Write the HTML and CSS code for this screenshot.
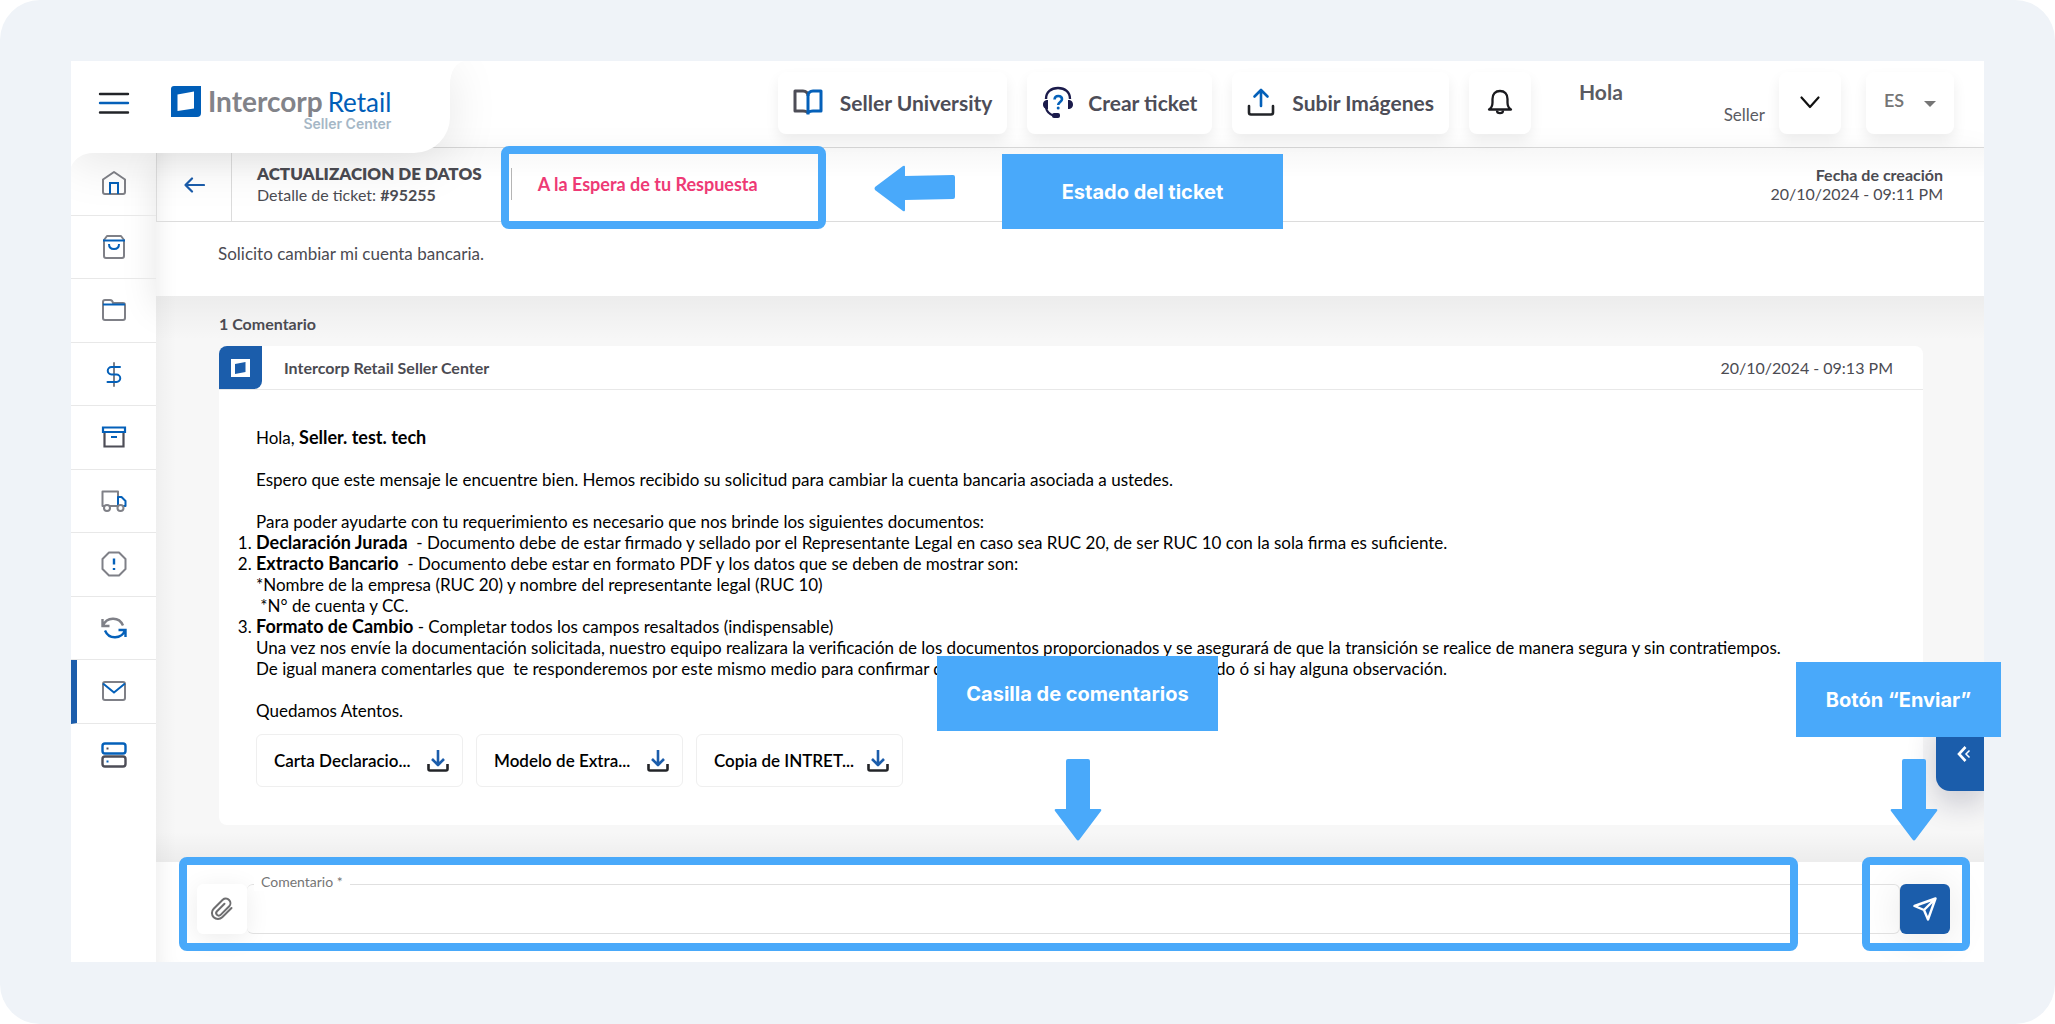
FILE: index.html
```html
<!DOCTYPE html>
<html lang="es">
<head>
    <meta charset="UTF-8">
    <meta name="viewport" content="width=device-width, initial-scale=1.0">
    <title>Detalle de ticket</title>
    <link rel="stylesheet" href="styles.css">
</head>
<body>
    <div class="board">
        <div class="app">
            <header class="topbar">
                <div class="brand">
                    <button class="menu-btn" aria-label="Menú">
                        <svg width="32" height="22" viewBox="0 0 32 22" fill="none" stroke-width="2.4" stroke-linecap="round">
                            <path d="M2 2h28M2 20.500h28" stroke="#222428"/>
                            <path d="M2 11h28" stroke="#0460b9"/>
                        </svg>
                    </button>
                    <a class="logo" href="#">
                        <svg width="30" height="31" viewBox="0 0 30 31">
                            <path d="M3 0h27v27a4 4 0 0 1-4 4H0V3a3 3 0 0 1 3-3z" fill="#005eb8"/>
                            <path d="M6.500 8.500L23 5.500v17L6.500 25z" fill="#fff"/>
                        </svg>
                        <span class="logo-text">
                            <span class="logo-name"><b>Intercorp</b><span>Retail</span></span>
                            <span class="logo-sub">Seller Center</span>
                        </span>
                    </a>
                    <svg class="brand-flare" width="14" height="24" viewBox="0 0 14 24"><path d="M0 0h14C6 2 0 10 0 24z" fill="#fff"/></svg>
                    <svg class="brand-corner" width="22" height="14" viewBox="0 0 22 14"><path d="M0 0h22C12 0 4 5 0 14z" fill="#fff"/></svg>
                </div>

                <nav class="actions">
                    <a class="action" href="#">
                        <svg width="30" height="27" viewBox="0 0 30 27" fill="none" stroke-width="3" stroke-linejoin="round">
                            <path d="M15 24C14 22.500 12 22 10 22H2V2h8c3 0 5 2 5 5" stroke="#4d4d57"/>
                            <path d="M15 25.500V7c0-3 2-5 5-5h8v20h-8c-2 0-4 .5-5 2" stroke="#0460b9"/>
                        </svg>
                        Seller University
                    </a>
                    <a class="action action-ticket" href="#">
                        <svg width="32" height="32" viewBox="0 0 32 32" fill="none">
                            <path d="M4 13C4 6 9 2 16 2s12 4 12 11" stroke="#1b1b4b" stroke-width="2.400"/>
                            <path d="M4 22c1 4 3 6 7 7.500" stroke="#1b1b4b" stroke-width="2.200"/>
                            <path d="M6 14v9C2.500 23 1 21 1 18.500S2.500 14 6 14zM26 14v9c3.500 0 5-2 5-4.500S29.500 14 26 14z" fill="#1b1b4b"/>
                            <rect x="10" y="27" width="8" height="5" rx="2" fill="#1b1b4b"/>
                            <path d="M12.500 13.500c.2-2.300 1.700-3.500 3.700-3.500 2.200 0 3.800 1.300 3.800 3.300 0 2.500-3.800 3-3.800 5.700" stroke="#0460b9" stroke-width="2.600"/>
                            <circle cx="16.200" cy="22" r="1.500" fill="#0460b9"/>
                        </svg>
                        Crear ticket
                    </a>
                    <a class="action" href="#">
                        <svg width="28" height="28" viewBox="0 0 28 28" fill="none" stroke-width="2.600" stroke-linecap="round" stroke-linejoin="round">
                            <path d="M14 18V2M7.500 8.500L14 2l6.500 6.500" stroke="#0460b9"/>
                            <path d="M2 18v6.500a2 2 0 0 0 2 2h20a2 2 0 0 0 2-2V18" stroke="#222428"/>
                        </svg>
                        Subir Imágenes
                    </a>
                    <button class="action action-icon" aria-label="Notificaciones">
                        <svg width="26" height="26" viewBox="0 0 26 26" fill="none" stroke="#1b1b1f" stroke-width="2.300" stroke-linejoin="round">
                            <path d="M2 20.500c2.500-1.500 3.500-3.500 3.500-7V10c0-5 3-8 7.500-8s7.500 3 7.500 8v3.500c0 3.500 1 5.500 3.500 7z"/>
                            <path d="M10 21.500c0 1.700 1.200 2.700 3 2.700s3-1 3-2.700"/>
                        </svg>
                    </button>
                    <div class="user">
                        <span class="user-hello">Hola</span>
                        <span class="user-role">Seller</span>
                    </div>
                    <button class="action action-icon" aria-label="Cuenta">
                        <svg width="20" height="13" viewBox="0 0 20 13" fill="none" stroke="#111" stroke-width="2.200" stroke-linecap="round" stroke-linejoin="round"><path d="M1.500 1.500L10 11l8.500-9.500"/></svg>
                    </button>
                    <div class="language">
                        <select aria-label="Idioma">
                            <option>ES</option>
                            <option>EN</option>
                        </select>
                        <svg width="12" height="6" viewBox="0 0 12 6"><path d="M0 0h12L6 6z" fill="#757575"/></svg>
                    </div>
                </nav>
            </header>

            <div class="layout">
                <nav class="sidebar">
                    <a href="#" aria-label="Inicio">
                        <svg width="26" height="26" viewBox="0 0 26 26" fill="none" stroke-width="2">
                            <path d="M2 9.500L13 2l11 7.500V22a2 2 0 0 1-2 2H4a2 2 0 0 1-2-2z" stroke="#7f8087" stroke-linejoin="round"/>
                            <path d="M9 24V13h8v11" stroke="#0460b9"/>
                        </svg>
                    </a>
                    <a href="#" aria-label="Órdenes">
                        <svg width="26" height="26" viewBox="0 0 26 26" fill="none" stroke-width="2">
                            <path d="M3 6l3-4h14l3 4v16a2 2 0 0 1-2 2H5a2 2 0 0 1-2-2z" stroke="#7f8087" stroke-linejoin="round"/>
                            <path d="M2 6.500h22M8 10c0 3 2 5 5 5s5-2 5-5" stroke="#0460b9"/>
                        </svg>
                    </a>
                    <a href="#" aria-label="Catálogo">
                        <svg width="26" height="26" viewBox="0 0 26 26" fill="none" stroke-width="2">
                            <path d="M2 7V5a2 2 0 0 1 2-2h5q2.500 0 3 3h10a2 2 0 0 1 2 2v13a2 2 0 0 1-2 2H4a2 2 0 0 1-2-2z" stroke="#7f8087" stroke-linejoin="round"/>
                            <path d="M2 7.500h22" stroke="#0460b9"/>
                        </svg>
                    </a>
                    <a href="#" aria-label="Finanzas">
                        <svg width="26" height="26" viewBox="0 0 26 26" fill="none" stroke-width="2" stroke-linecap="round">
                            <path d="M13 2v23" stroke="#7f8087"/>
                            <path d="M19 6h-8.500a3.500 3.500 0 0 0 0 7.500h5a3.500 3.500 0 0 1 0 7.500H6.500" stroke="#0460b9"/>
                        </svg>
                    </a>
                    <a href="#" aria-label="Inventario">
                        <svg width="26" height="26" viewBox="0 0 26 26" fill="none" stroke-width="2.200">
                            <path d="M3.500 8v14.500h19V8" stroke="#4d4d57"/>
                            <path d="M2 3.500h22V8H2zM10 13h6" stroke="#0460b9"/>
                        </svg>
                    </a>
                    <a href="#" aria-label="Envíos">
                        <svg width="26" height="26" viewBox="0 0 26 26" fill="none" stroke-width="2">
                            <path d="M3 18H1.500V3.500H17V18H9" stroke="#7f8087" stroke-linejoin="round"/>
                            <path d="M17 18V9h3.500l4 4v5H22" stroke="#0460b9" stroke-linejoin="round"/>
                            <circle cx="6" cy="20" r="3" stroke="#7f8087" fill="#fff"/>
                            <circle cx="19.500" cy="20" r="3" stroke="#7f8087" fill="#fff"/>
                        </svg>
                    </a>
                    <a href="#" aria-label="Alertas">
                        <svg width="26" height="26" viewBox="0 0 26 26" fill="none" stroke-width="2">
                            <path d="M8 1.500h10L24.500 8v10L18 24.500H8L1.500 18V8z" stroke="#7f8087" stroke-linejoin="round"/>
                            <path d="M13 7.500v6M13 17v2" stroke="#0460b9" stroke-width="2.400"/>
                        </svg>
                    </a>
                    <a href="#" aria-label="Devoluciones">
                        <svg width="26" height="26" viewBox="0 0 26 26" fill="none" stroke-width="2.400">
                            <path d="M1.500 4v7h7M2 10.500C5.500 2 18 1 22 10.500" stroke="#7f8087"/>
                            <path d="M24.500 22v-7h-7M24 15.500C20.500 24 8 25 4 15.500" stroke="#0460b9"/>
                        </svg>
                    </a>
                    <a class="active" href="#" aria-label="Tickets">
                        <svg width="26" height="26" viewBox="0 0 26 26" fill="none" stroke-width="2">
                            <rect x="2" y="4" width="22" height="18" rx="2" stroke="#7f8087"/>
                            <path d="M2 5.500l11 9 11-9" stroke="#0460b9"/>
                        </svg>
                    </a>
                    <a href="#" aria-label="Servicios">
                        <svg width="26" height="26" viewBox="0 0 26 26" fill="none" stroke-width="2.400">
                            <rect x="1.500" y="1.500" width="23" height="10" rx="2.500" stroke="#0460b9"/>
                            <rect x="1.500" y="14.500" width="23" height="10" rx="2.500" stroke="#4d4d57"/>
                            <path d="M5.500 6.500h2" stroke="#4d4d57" stroke-width="2"/>
                            <path d="M5.500 19.500h2" stroke="#0460b9" stroke-width="2"/>
                        </svg>
                    </a>
                </nav>

                <main class="main">
                    <section class="ticket">
                        <div class="ticket-head">
                            <a class="back" href="#" aria-label="Volver">
                                <svg width="21" height="16" viewBox="0 0 21 16" fill="none" stroke="#1b5dab" stroke-width="2.200" stroke-linecap="round" stroke-linejoin="round"><path d="M20 8H1.500M8 1.500L1.500 8 8 14.500"/></svg>
                            </a>
                            <div class="ticket-title">
                                <h1>ACTUALIZACION DE DATOS</h1>
                                <p>Detalle de ticket: <b>#95255</b></p>
                            </div>
                            <div class="ticket-status">A la Espera de tu Respuesta</div>
                            <div class="ticket-date">
                                <b>Fecha de creación</b>
                                <span>20/10/2024 - 09:11 PM</span>
                            </div>
                        </div>
                        <p class="ticket-summary">Solicito cambiar mi cuenta bancaria.</p>
                    </section>

                    <section class="comments">
                        <h2>1 Comentario</h2>
                        <article class="comment">
                            <header class="comment-head">
                                <span class="avatar">
                                    <svg width="19" height="18" viewBox="0 0 19 18"><path fill-rule="evenodd" d="M0 0h19v18H0zM4 5v10l10.500-2V3z" fill="#fff"/></svg>
                                </span>
                                <b>Intercorp Retail Seller Center</b>
                                <time>20/10/2024 - 09:13 PM</time>
                            </header>
                            <div class="comment-body">
                                <p>Hola, <b>Seller. test. tech</b></p>
                                <p>Espero que este mensaje le encuentre bien. Hemos recibido su solicitud para cambiar la cuenta bancaria asociada a ustedes.</p>
                                <div>Para poder ayudarte con tu requerimiento es necesario que nos brinde los siguientes documentos:</div>
                                <ol>
                                    <li><b>Declaración Jurada</b>&nbsp; - Documento debe de estar firmado y sellado por el Representante Legal en caso sea RUC 20, de ser RUC 10 con la sola firma es suficiente.</li>
                                    <li><b>Extracto Bancario</b>&nbsp; - Documento debe estar en formato PDF y los datos que se deben de mostrar son:<br>
                                        *Nombre de la empresa (RUC 20) y nombre del representante legal (RUC 10)<br>
                                        &nbsp;*N° de cuenta y CC.</li>
                                    <li><b>Formato de Cambio</b> - Completar todos los campos resaltados (indispensable)<br>
                                        Una vez nos envíe la documentación solicitada, nuestro equipo realizara la verificación de los documentos proporcionados y se asegurará de que la transición se realice de manera segura y sin contratiempos.<br>
                                        De igual manera comentarles que&nbsp; te responderemos por este mismo medio para confirmar que el cambio de cuenta ya fue realizado ó si hay alguna observación.</li>
                                </ol>
                                <p>Quedamos Atentos.</p>
                            </div>
                            <div class="files">
                                <a class="file" href="#">Carta Declaracio...
                                    <svg width="22" height="22" viewBox="0 0 22 22" fill="none" stroke-width="2.600" stroke-linejoin="round"><path d="M11 0v14M5 9l6 6 6-6" stroke="#1b5dab"/><path d="M1.500 14v5a1.500 1.500 0 0 0 1.500 1.500h16a1.500 1.500 0 0 0 1.500-1.500v-5" stroke="#222428"/></svg>
                                </a>
                                <a class="file" href="#">Modelo de Extra...
                                    <svg width="22" height="22" viewBox="0 0 22 22" fill="none" stroke-width="2.600" stroke-linejoin="round"><path d="M11 0v14M5 9l6 6 6-6" stroke="#1b5dab"/><path d="M1.500 14v5a1.500 1.500 0 0 0 1.500 1.500h16a1.500 1.500 0 0 0 1.500-1.500v-5" stroke="#222428"/></svg>
                                </a>
                                <a class="file" href="#">Copia de INTRET...
                                    <svg width="22" height="22" viewBox="0 0 22 22" fill="none" stroke-width="2.600" stroke-linejoin="round"><path d="M11 0v14M5 9l6 6 6-6" stroke="#1b5dab"/><path d="M1.500 14v5a1.500 1.500 0 0 0 1.500 1.500h16a1.500 1.500 0 0 0 1.500-1.500v-5" stroke="#222428"/></svg>
                                </a>
                            </div>
                        </article>
                        <button class="side-tab" aria-label="Abrir panel">
                            <svg width="14" height="16" viewBox="0 0 14 16" fill="none" stroke="#fff"><path d="M8.500 1L2 8l6.500 7" stroke-width="2.600"/><path d="M12.500 4.500L9 8l3.500 3.500" stroke-width="1.500"/></svg>
                        </button>
                    </section>

                    <form class="reply">
                        <button class="attach" type="button" aria-label="Adjuntar archivo">
                            <svg width="24" height="24" viewBox="0 0 24 24" fill="none" stroke="#6e6e70" stroke-width="2" stroke-linecap="round"><path d="M21.500 11l-9.300 9.300a6 6 0 0 1-8.500-8.500l9-9a4.600 4.600 0 0 1 6.500 6.500l-8.600 8.600a2.500 2.500 0 0 1-3.600-3.600l7.500-7.500"/></svg>
                        </button>
                        <div class="reply-field">
                            <label for="comentario">Comentario *</label>
                            <input id="comentario" type="text" required>
                        </div>
                        <button class="send" type="submit" aria-label="Enviar">
                            <svg width="24" height="24" viewBox="0 0 24 24" fill="none" stroke="#fff" stroke-width="2.400" stroke-linejoin="round"><path d="M22.500 1.500L1.500 9l9.500 4 4 9.500zM22.500 1.500L11 13"/></svg>
                        </button>
                    </form>
                </main>
            </div>
        </div>

        <!-- Guide marks drawn over the app -->
        <div class="mark mark-status"></div>
        <div class="mark mark-reply"></div>
        <div class="mark mark-send"></div>
        <svg class="arrow arrow-status" width="82" height="48" viewBox="0 0 82 48"><path d="M1 22L29 1q2-1 2 1v9l48-1q2 0 2 2v20q0 2-2 2l-48 1v10q0 2-2 1L1 25q-1-1.500 0-3z"/></svg>
        <svg class="arrow arrow-reply" width="48" height="82" viewBox="0 0 48 82"><path d="M14 0h20q2 0 2 2v48h10q2 0 1 2L25.500 80.500q-1.500 2-3 0L1 52q-1-2 1-2h10V2q0-2 2-2z"/></svg>
        <svg class="arrow arrow-send" width="48" height="82" viewBox="0 0 48 82"><path d="M14 0h20q2 0 2 2v48h10q2 0 1 2L25.500 80.500q-1.500 2-3 0L1 52q-1-2 1-2h10V2q0-2 2-2z"/></svg>
        <div class="tag tag-status">Estado del ticket</div>
        <div class="tag tag-reply">Casilla de comentarios</div>
        <div class="tag tag-send">Botón “Enviar”</div>
    </div>
</body>
</html>
```
FILE: styles.css
```css
* {
    box-sizing: border-box;
}

body {
    margin: 0;
    background: #fff;
    color: #4b4b52;
    font-family: Lato, "Open Sans", sans-serif;
    font-size: 16px;
}

h1, h2, p, ol {
    margin: 0;
    padding: 0;
}

a {
    color: inherit;
    text-decoration: none;
}

button {
    padding: 0;
    border: 0;
    background: none;
    font: inherit;
    cursor: pointer;
}

svg {
    flex: none;
    display: block;
}

.board {
    position: relative;
    display: flex;
    min-height: 100vh;
    padding: 61px 71px 62px;
    border-radius: 40px;
    background: #eff3f8;
}

.app {
    flex: 1;
    display: flex;
    flex-direction: column;
    background: #fff;
    overflow: hidden;
}

/* Top bar */
.topbar {
    display: flex;
    justify-content: space-between;
    height: 87px;
    border-bottom: 1px solid #dcdcdc;
}

.brand {
    position: relative;
    z-index: 2;
    display: flex;
    align-items: center;
    width: 379px;
    height: 92px;
    padding-left: 27px;
    border-radius: 0 0 36px 0;
    background: #fff;
    box-shadow: 0 10px 50px rgba(0, 0, 0, 0.1);
}

.brand-flare {
    position: absolute;
    top: 0;
    left: 100%;
}

.brand-corner {
    position: absolute;
    top: 100%;
    left: 0;
}

.menu-btn {
    margin-top: -9px;
}

.logo {
    display: flex;
    gap: 7px;
    margin: 2px 0 0 41px;
}

.logo-text {
    display: flex;
    flex-direction: column;
    align-items: flex-end;
}

.logo-name {
    display: flex;
    align-items: baseline;
    gap: 5px;
    color: #005eb8;
    font-size: 26px;
    line-height: 30px;
}

.logo-name b {
    color: #828389;
    font-size: 28px;
}

.logo-sub {
    color: #a5b7c6;
    font-family: Inter, sans-serif;
    font-size: 14px;
    font-weight: 600;
    line-height: 14px;
}

.actions {
    position: relative;
    z-index: 1;
    display: flex;
    gap: 20px;
    padding: 11px 30px 0 0;
}

.action {
    display: flex;
    align-items: center;
    justify-content: center;
    gap: 17px;
    height: 62px;
    padding: 0 15px 2px;
    border-radius: 8px;
    background: #fff;
    box-shadow: 0 7px 14px rgba(0, 0, 0, 0.07);
    color: #4d4d57;
    font-size: 21px;
    font-weight: 700;
}

.action-ticket {
    gap: 14px;
}

.action-icon {
    width: 62px;
    padding: 0 0 2px;
}

.user {
    display: flex;
    flex-direction: column;
    width: 186px;
    margin: 7px -6px 0 28px;
    color: #5b5b62;
}

.user-hello {
    font-size: 21px;
    font-weight: 700;
    line-height: 26px;
}

.user-role {
    align-self: flex-end;
    font-size: 17px;
    line-height: 20px;
}

.language {
    position: relative;
    margin-left: 5px;
}

.language select {
    appearance: none;
    width: 88px;
    height: 62px;
    padding: 0 18px 6px;
    border: 0;
    border-radius: 8px;
    background: #fff;
    box-shadow: 0 7px 14px rgba(0, 0, 0, 0.07);
    color: #757575;
    font: 600 18px Lato, sans-serif;
}

.language svg {
    position: absolute;
    top: 29px;
    right: 18px;
    pointer-events: none;
}

/* Sidebar */
.layout {
    flex: 1;
    display: flex;
}

.sidebar {
    position: relative;
    z-index: 1;
    display: grid;
    grid-auto-rows: 1fr;
    width: 85px;
    height: 635px;
    margin-top: 4px;
}

.sidebar a {
    display: flex;
    align-items: center;
    justify-content: center;
    border-bottom: 1px solid #e8e8e8;
}

.sidebar a:last-child {
    border-bottom: 0;
}

.sidebar .active {
    padding-right: 6px;
    border-left: 6px solid #1b5dab;
    border-bottom-color: #e8e8e8;
}

/* Ticket header */
.main {
    flex: 1;
    display: flex;
    flex-direction: column;
    box-shadow: inset 20px 0 20px -16px rgba(0, 0, 0, 0.07);
}

.ticket {
    height: 148px;
    background: linear-gradient(rgba(0, 0, 0, 0.03), transparent 30px);
    box-shadow: 0 12px 34px rgba(0, 0, 0, 0.1);
}

.ticket-head {
    display: flex;
    height: 74px;
    border-left: 1px solid #dcdcdc;
    border-bottom: 1px solid #dcdcdc;
}

.back {
    display: flex;
    align-items: center;
    justify-content: center;
    width: 75px;
    border-right: 1px solid #dcdcdc;
}

.ticket-title {
    padding: 14px 0 0 25px;
}

.ticket-title h1 {
    font-size: 17px;
    font-weight: 800;
    line-height: 23px;
}

.ticket-title p {
    font-size: 16px;
    line-height: 19px;
}

.ticket-status {
    height: 32px;
    margin: 20px 0 0 29px;
    padding-left: 26px;
    border-left: 1px solid #b5b5b5;
    color: #ee3a75;
    font-size: 18px;
    font-weight: 700;
    line-height: 32px;
}

.ticket-date {
    display: flex;
    flex-direction: column;
    align-items: flex-end;
    margin-left: auto;
    padding: 17px 41px 0 0;
    font-size: 16px;
    line-height: 19px;
}

.ticket-summary {
    padding: 20px 62px;
    font-size: 17px;
    line-height: 23px;
}

/* Comments */
.comments {
    position: relative;
    flex: 1;
    padding: 17px 61px 37px 63px;
    background:
        linear-gradient(90deg, rgba(0, 0, 0, 0.03), transparent 20px),
        linear-gradient(rgba(0, 0, 0, 0.045), transparent 44px),
        linear-gradient(0deg, rgba(0, 0, 0, 0.045), transparent 30px),
        #f7f7f7;
}

.comments h2 {
    font-size: 16px;
    font-weight: 700;
    line-height: 22px;
}

.comment {
    min-height: 479px;
    margin-top: 11px;
    border-radius: 8px;
    background: #fff;
}

.comment-head {
    display: flex;
    align-items: center;
    height: 44px;
    padding-right: 30px;
    border-bottom: 1px solid #e8e8e8;
    font-size: 16px;
}

.comment-head time {
    margin-left: auto;
}

.avatar {
    display: flex;
    align-items: center;
    justify-content: center;
    width: 43px;
    height: 43px;
    margin-right: 22px;
    border-radius: 8px 0 8px 0;
    background: #1b5dab;
}

.comment-body {
    padding: 37px 37px 0;
    color: #000;
    font-size: 17px;
    line-height: 21px;
}

.comment-body b {
    font-size: 18px;
    line-height: 20px;
}

.comment-body p {
    margin-bottom: 21px;
}

.comment-body ol {
    margin-bottom: 21px;
}

.comment-body p:last-child {
    margin-bottom: 0;
}

.files {
    display: flex;
    gap: 13px;
    padding: 13px 37px;
}

.file {
    display: flex;
    align-items: center;
    justify-content: space-between;
    width: 207px;
    height: 53px;
    padding: 0 13px 0 17px;
    border: 1px solid #efefef;
    border-radius: 6px;
    color: #000;
    font-size: 17px;
    font-weight: 600;
}

.side-tab {
    position: absolute;
    right: 0;
    bottom: 71px;
    display: flex;
    align-items: center;
    width: 48px;
    height: 74px;
    padding-left: 21px;
    border-radius: 14px 0 0 14px;
    background: #1b5dab;
    box-shadow: 0 12px 30px rgba(20, 20, 60, 0.2);
}

/* Reply form */
.reply {
    display: flex;
    height: 100px;
    padding: 22px 34px 0 41px;
}

.attach {
    display: flex;
    align-items: center;
    justify-content: center;
    width: 50px;
    height: 50px;
    border-radius: 6px;
    background: #fff;
    box-shadow: 0 4px 24px rgba(0, 0, 0, 0.08);
}

.reply-field {
    position: relative;
    flex: 1;
}

.reply-field label {
    position: absolute;
    top: -11px;
    left: 7px;
    padding: 0 7px;
    background: #fff;
    color: #757575;
    font-size: 14px;
    line-height: 18px;
}

.reply-field input {
    display: block;
    width: 100%;
    height: 50px;
    padding: 0 15px;
    border: 1px solid #e0e0e0;
    border-left: 0;
    border-radius: 6px;
    background: none;
    font: 16px Lato, sans-serif;
}

.send {
    display: flex;
    align-items: center;
    justify-content: center;
    width: 50px;
    height: 50px;
    border-radius: 6px;
    background: #1b5dab;
    box-shadow: 0 4px 40px rgba(0, 0, 0, 0.1);
}

/* Guide marks */
.mark {
    position: absolute;
    z-index: 3;
    border: 8px solid #49a9fa;
    border-radius: 8px;
    pointer-events: none;
}

.mark-status {
    top: 146px;
    left: 501px;
    width: 325px;
    height: 83px;
}

.mark-reply {
    right: 257px;
    bottom: 73px;
    left: 179px;
    height: 94px;
}

.mark-send {
    right: 85px;
    bottom: 73px;
    width: 108px;
    height: 94px;
}

.arrow {
    position: absolute;
    z-index: 3;
    fill: #49a9fa;
}

.arrow-status {
    top: 165px;
    left: 874px;
}

.arrow-reply {
    bottom: 183px;
    left: 1054px;
}

.arrow-send {
    right: 117px;
    bottom: 183px;
}

.tag {
    position: absolute;
    z-index: 3;
    display: flex;
    align-items: center;
    justify-content: center;
    width: 281px;
    height: 75px;
    background: #49a9fa;
    color: #fff;
    font-family: Inter, sans-serif;
    font-size: 20px;
    font-weight: 700;
}

.tag-status {
    top: 154px;
    left: 1002px;
}

.tag-reply {
    bottom: 293px;
    left: 937px;
}

.tag-send {
    right: 54px;
    bottom: 287px;
    width: 205px;
}
```
